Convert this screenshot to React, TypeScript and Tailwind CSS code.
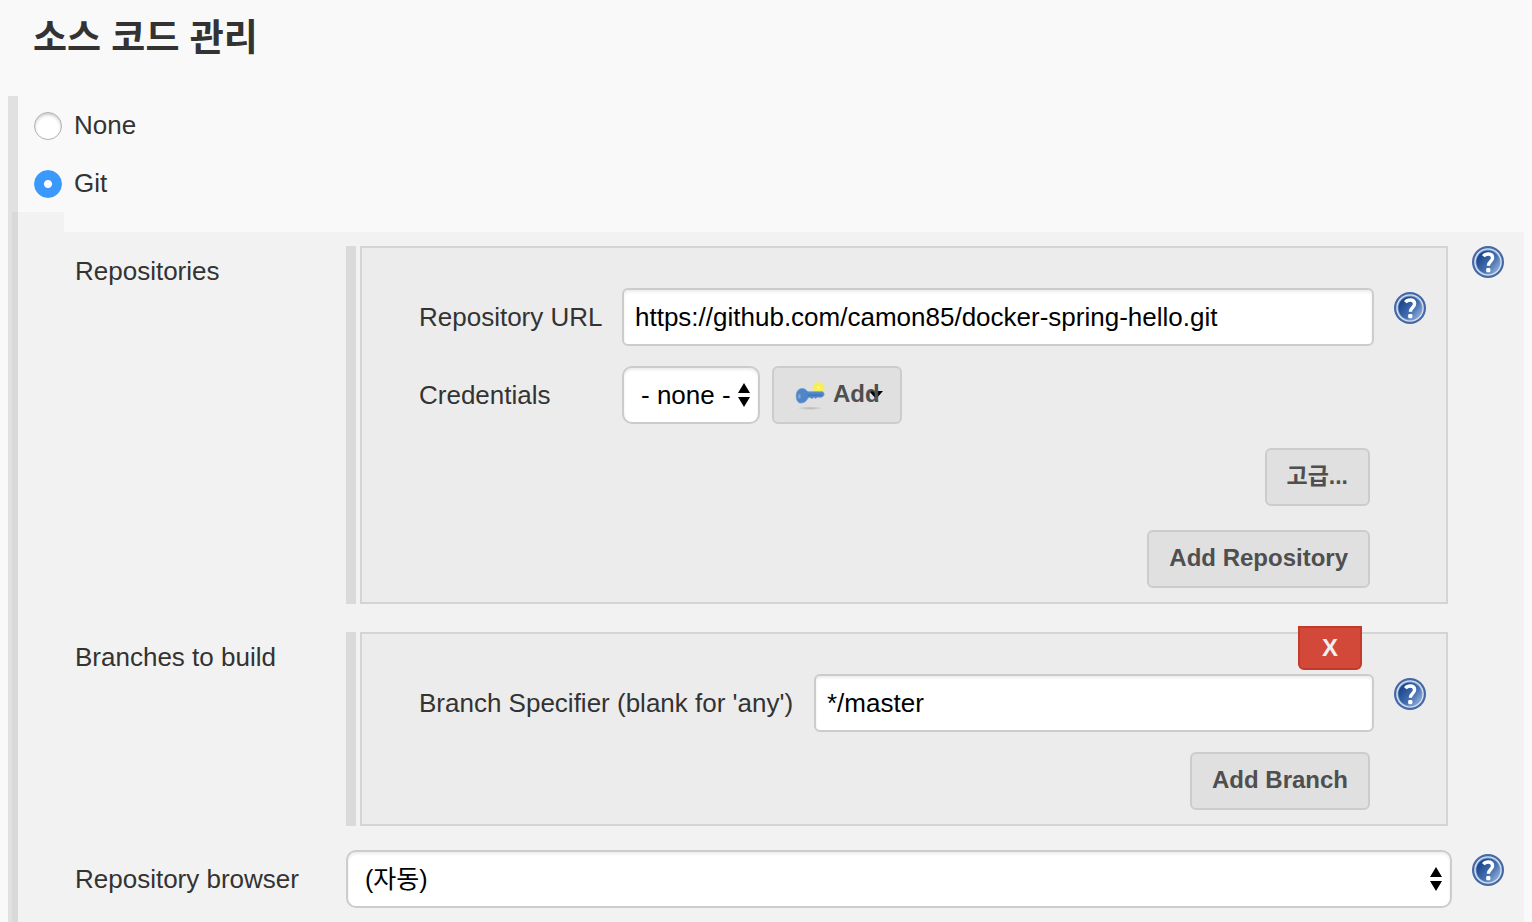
import React, { useId, useState } from "react";

function HelpIcon() {
  const id = useId();
  return (
    <svg viewBox="0 0 32 32" className="block size-8" aria-hidden="true">
      <defs>
        <linearGradient id={id} x1="0" y1="0.1" x2="1" y2="0.9">
          <stop offset="0.15" stopColor="#1d4890" />
          <stop offset="0.6" stopColor="#4470b0" />
          <stop offset="0.95" stopColor="#8fafd9" />
        </linearGradient>
      </defs>
      <circle cx="16" cy="16" r="16" fill="#4469a6" />
      <circle cx="16" cy="16" r="13.8" fill="#d5e0f0" />
      <circle cx="16" cy="16" r="12.4" fill="#7f9dca" />
      <circle cx="16" cy="16" r="11.6" fill={`url(#${id})`} />
      <path
        d="M11.4 10.2C12.6 8.6 14.2 8 16.2 8c2.8 0 4.4 1.4 4.4 3.8 0 3.8-4.2 3.6-4.2 8"
        fill="none"
        stroke="#fff"
        strokeWidth="3.4"
      />
      <rect x="14.2" y="22" width="4.2" height="4.2" rx="1.2" fill="#fff" />
    </svg>
  );
}

function Help({ label }: { label: string }) {
  return (
    <a href="#help" aria-label={label} className="block size-8 shrink-0 rounded-full">
      <HelpIcon />
    </a>
  );
}

function KeyIcon() {
  const id = useId();
  return (
    <svg viewBox="0 0 32 32" className="block size-8 shrink-0" aria-hidden="true">
      <defs>
        <radialGradient id={`${id}-glow`}>
          <stop offset="0" stopColor="#fdfbb0" />
          <stop offset="0.35" stopColor="#f8f04a" />
          <stop offset="0.75" stopColor="#f3ec66" />
          <stop offset="1" stopColor="#f3ea5a" stopOpacity="0" />
        </radialGradient>
        <radialGradient id={`${id}-shade`}>
          <stop offset="0" stopColor="#b4b4b4" />
          <stop offset="1" stopColor="#b4b4b4" stopOpacity="0" />
        </radialGradient>
      </defs>
      <ellipse cx="16" cy="30.2" rx="13" ry="1.8" fill={`url(#${id}-shade)`} />
      <circle cx="24.6" cy="9.8" r="6.6" fill={`url(#${id}-glow)`} />
      <path
        d="M5 11.4c2-1.2 5-1.2 7 .6l2 1.8h14.6l1.4 1.4v2l-2 2h-5l-1.2 1.4-1.8-1.4-1.8 1.4-2-1h-1.8l-2 3c-1.8 2.2-4.8 2.8-7.2 2.2C3.400 23.600 2.200 21.200 2.200 18.200c0-3 .8-5.600 2.800-6.800z"
        fill="#4f86c8"
        stroke="#6f9ad0"
        strokeWidth="0.8"
        strokeLinejoin="round"
      />
      <path d="M13.600 17.200h14.400" stroke="#3f74b8" strokeWidth="1.2" />
      <ellipse cx="5.400" cy="18.400" rx="1.300" ry="2.400" fill="#7fa6d8" />
    </svg>
  );
}

function SelectBox({
  id,
  options,
  className,
}: {
  id: string;
  options: string[];
  className: string;
}) {
  return (
    <div className={`relative ${className}`}>
      <select
        id={id}
        className="block h-[58px] w-full appearance-none rounded-[10px] border-2 border-[#cccccc] bg-white pr-5 pl-[17px] text-black shadow-[inset_0_2px_3px_rgba(0,0,0,0.08)]"
      >
        {options.map((option) => (
          <option key={option}>{option}</option>
        ))}
      </select>
      <svg
        viewBox="0 0 12 24"
        className="pointer-events-none absolute top-[17px] right-[10px] h-6 w-3"
        aria-hidden="true"
      >
        <path d="M6 0l6 10H0zM6 24l6-10H0z" fill="#000" />
      </svg>
    </div>
  );
}

function Button({ children }: { children: React.ReactNode }) {
  return (
    <button
      type="button"
      className="flex h-[58px] items-center rounded-md border-2 border-[#cccccc] bg-[#e0e0e0] px-5 pb-0.5 text-[24px] font-bold text-[#4f4f4f]"
    >
      {children}
    </button>
  );
}

function Chunk({ children }: { children: React.ReactNode }) {
  return (
    <div className="mr-1 flex min-w-0 flex-1 gap-1">
      <div className="w-2.5 shrink-0 bg-[#dadada]" />
      <div className="relative min-w-0 flex-1 border-2 border-[#d4d4d4] bg-[#ececec] pt-10 pr-5 pb-3.5 pl-[57px]">
        {children}
      </div>
    </div>
  );
}

const textField =
  "block h-[58px] w-full min-w-0 flex-1 rounded-md border-2 border-[#cccccc] bg-white px-[11px] text-black shadow-[inset_0_2px_3px_rgba(0,0,0,0.08)]";

export default function App() {
  const [scm, setScm] = useState("Git");

  return (
    <main className="min-h-screen bg-[#f9f9f9] px-2 font-['Liberation_Sans','Noto_Sans_CJK_KR',sans-serif] text-[26px] leading-[30px] text-[#333333]">
      <h1 className="flex h-24 items-start pt-[18px] pl-[25px] text-[37px] leading-[42px] font-bold">
        소스 코드 관리
      </h1>

      <div className="border-l-4 border-[#e1e1e1]">
        <fieldset className="border-l-[6px] border-[#e1e1e1] pl-4">
          {["None", "Git"].map((name) => (
            <label key={name} className="flex h-[58px] w-fit items-center gap-3">
              <input
                type="radio"
                name="scm"
                checked={scm === name}
                onChange={() => setScm(name)}
                className="mt-0.5 size-7 appearance-none rounded-full border border-[#b0b0b0] bg-white shadow-[inset_0_2px_3px_rgba(0,0,0,0.2)] checked:border-[#3b99fc] checked:bg-[radial-gradient(circle,#ffffff_3.5px,#3b99fc_4.5px)] checked:shadow-none"
              />
              {name}
            </label>
          ))}
        </fieldset>

        <section className="border-l-[6px] border-[#d9d9d9]">
          <div className="h-5 w-[46px] bg-[#f2f2f2]" />
          <div className="flex min-h-[690px] flex-col bg-[#f2f2f2] pt-3.5 pr-5 pb-3.5 pl-[57px]">
            <div className="mb-7 flex items-start">
              <h2 className="w-[271px] shrink-0 leading-[50px]">Repositories</h2>
              <Chunk>
                <div className="mb-5 flex items-center">
                  <label htmlFor="repo-url" className="w-[203px] shrink-0">
                    Repository URL
                  </label>
                  <input
                    id="repo-url"
                    type="text"
                    defaultValue="https://github.com/camon85/docker-spring-hello.git"
                    className={textField}
                  />
                  <div className="ml-5 self-start pt-1">
                    <Help label="Repository URL" />
                  </div>
                </div>
                <div className="mb-6 flex items-center">
                  <label htmlFor="credentials" className="w-[203px] shrink-0">
                    Credentials
                  </label>
                  <SelectBox id="credentials" options={["- none -"]} className="mr-3 w-[138px]" />
                  <Button>
                    <span className="mr-[7px]">
                      <KeyIcon />
                    </span>
                    <span className="relative">
                      <svg
                        viewBox="0 0 14 8"
                        className="pointer-events-none absolute top-3 -right-[3px] h-2 w-3.5"
                        aria-hidden="true"
                      >
                        <path d="M0 0h14L7 8z" fill="#000" />
                      </svg>
                      <span className="relative">Add</span>
                    </span>
                  </Button>
                </div>
                <div className="mr-14 flex flex-col items-end gap-6">
                  <Button>
                    <span className="text-[23px]">고급...</span>
                  </Button>
                  <Button>Add Repository</Button>
                </div>
              </Chunk>
              <div className="ml-5">
                <Help label="Repositories" />
              </div>
            </div>

            <div className="mb-6 flex items-start">
              <h2 className="w-[271px] shrink-0 leading-[50px]">Branches to build</h2>
              <Chunk>
                <button
                  type="button"
                  className="absolute -top-2 right-[84px] h-11 w-16 rounded-b-md border-2 border-[#c23a2c] bg-[#d24939] text-[24px] font-bold text-[#f0f0f0]"
                >
                  X
                </button>
                <div className="mb-5 flex items-center">
                  <label htmlFor="branch" className="w-[395px] shrink-0">
                    Branch Specifier (blank for 'any')
                  </label>
                  <input id="branch" type="text" defaultValue="*/master" className={textField} />
                  <div className="ml-5 self-start pt-1">
                    <Help label="Branch Specifier" />
                  </div>
                </div>
                <div className="mr-14 flex justify-end">
                  <Button>Add Branch</Button>
                </div>
              </Chunk>
              <div className="w-[52px] shrink-0" />
            </div>

            <div className="flex items-center">
              <label htmlFor="browser" className="w-[271px] shrink-0">
                Repository browser
              </label>
              <SelectBox
                id="browser"
                options={["(자동)"]}
                className="min-w-0 flex-1 text-[25px]"
              />
              <div className="ml-5 self-start pt-1">
                <Help label="Repository browser" />
              </div>
            </div>
          </div>
        </section>
      </div>
    </main>
  );
}
